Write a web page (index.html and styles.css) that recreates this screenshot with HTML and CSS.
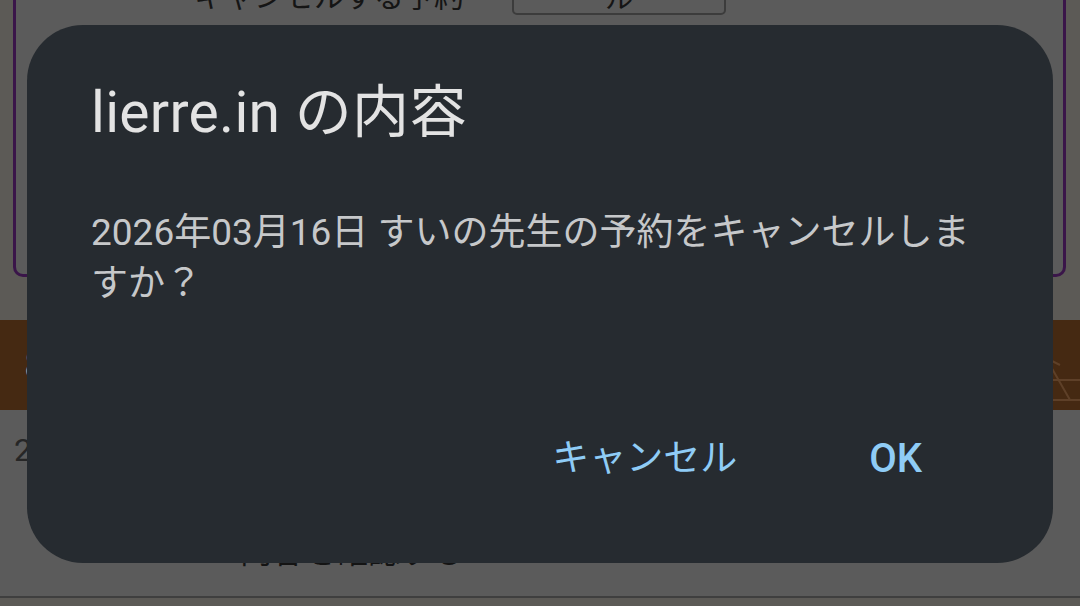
FILE: index.html
```html
<!DOCTYPE html>
<html lang="ja">
<head>
    <meta charset="UTF-8">
    <meta name="viewport" content="width=device-width, initial-scale=1.0">
    <title>lierre.in</title>
    <link rel="stylesheet" href="styles.css">
</head>
<body>
    <div class="page">
        <div class="card">
            <div class="card-row">
                <span class="card-text">キャンセルする予約</span>
                <span class="card-button">予約をキャンセル</span>
            </div>
        </div>
        <div class="banner">
            <span class="banner-text">8</span>
            <svg class="banner-deco" width="80" height="90" viewBox="0 0 80 90">
                <path d="M10 20 L60 45 M30 10 L70 80 M5 60 L80 60 M5 80 L80 80" stroke="#5e4028" stroke-width="2" fill="none"/>
            </svg>
        </div>
        <div class="list">
            <p class="list-date">2026年03月16日</p>
            <p class="list-name">内容を確認する</p>
        </div>
        <div class="list-line"></div>
    </div>

    <div class="dialog">
        <h1 class="dialog-title">lierre.in の内容</h1>
        <p class="dialog-message">2026年03月16日 すいの先生の予約をキャンセルしますか？</p>
        <div class="dialog-actions">
            <button class="dialog-btn">キャンセル</button>
            <button class="dialog-btn ok">OK</button>
        </div>
    </div>
</body>
</html>
```

FILE: styles.css
```css
html, body {
    margin: 0;
    height: 100%;
    overflow: hidden;
}
body {
    background: #5c5a56;
    font-family: Roboto, "Noto Sans CJK JP", sans-serif;
}
.page {
    position: relative;
    height: 606px;
}
.card {
    margin: 0 14px 0 13px;
    height: 297px;
    margin-top: -20px;
    box-sizing: border-box;
    border: 3px solid #3a1549;
    border-top: none;
    border-radius: 0 0 10px 10px;
    background: #5b5b5b;
}
.card-row {
    display: flex;
    align-items: flex-end;
    padding-left: 178px;
    gap: 48px;
    height: 35px;
}
.card-text {
    font-size: 30px;
    color: #151515;
    line-height: 26px;
    height: 26px;
    overflow: hidden;
    margin-bottom: 5px;
}
.card-button {
    width: 214px;
    height: 35px;
    box-sizing: border-box;
    border: 2px solid #3c3c3c;
    border-radius: 5px;
    font-size: 28px;
    line-height: 12px;
    color: #151515;
    text-align: center;
    overflow: hidden;
}
.banner {
    margin-top: 43px;
    height: 90px;
    background: #452912;
    display: flex;
    justify-content: space-between;
    align-items: center;
}
.banner-text {
    margin-left: 24px;
    font-size: 40px;
    color: #a89d92;
}
.list {
    background: #5b5b5b;
    height: 186px;
    padding-left: 14px;
    overflow: hidden;
}
.list p {
    margin: 0;
}
.list-date {
    padding-top: 14px;
    font-size: 32px;
    color: #262626;
}
.list-name {
    margin-top: 56px !important;
    padding-left: 226px;
    font-size: 32px;
    color: #141414;
}
.list-line {
    height: 2px;
    background: #3f3f3f;
}

.dialog {
    position: absolute;
    left: 27px;
    top: 25px;
    width: 1026px;
    height: 538px;
    box-sizing: border-box;
    background: #262b30;
    border-radius: 56px;
    padding: 0 64px;
    display: flex;
    flex-direction: column;
}
.dialog-title {
    margin: 50px 0 0;
    font-family: Roboto, "Noto Sans CJK JP", sans-serif;
    font-weight: 400;
    font-size: 57px;
    line-height: 76px;
    color: #e3e3e3;
    letter-spacing: 0.3px;
}
.dialog-message {
    margin: 56px 0 0;
    font-size: 37px;
    line-height: 51px;
    color: #c6c8ca;
}
.dialog-actions {
    margin-top: auto;
    margin-bottom: 74px;
    display: flex;
    justify-content: flex-end;
    align-items: center;
    padding-right: 67px;
}
.dialog-btn {
    background: none;
    border: none;
    padding: 0;
    font-family: Roboto, "Noto Sans CJK JP", sans-serif;
    font-size: 37px;
    font-weight: 400;
    line-height: 60px;
    color: #8fccf6;
}
.dialog-btn.ok {
    font-size: 40px;
    font-weight: 500;
    margin-left: 132px;
}
```
